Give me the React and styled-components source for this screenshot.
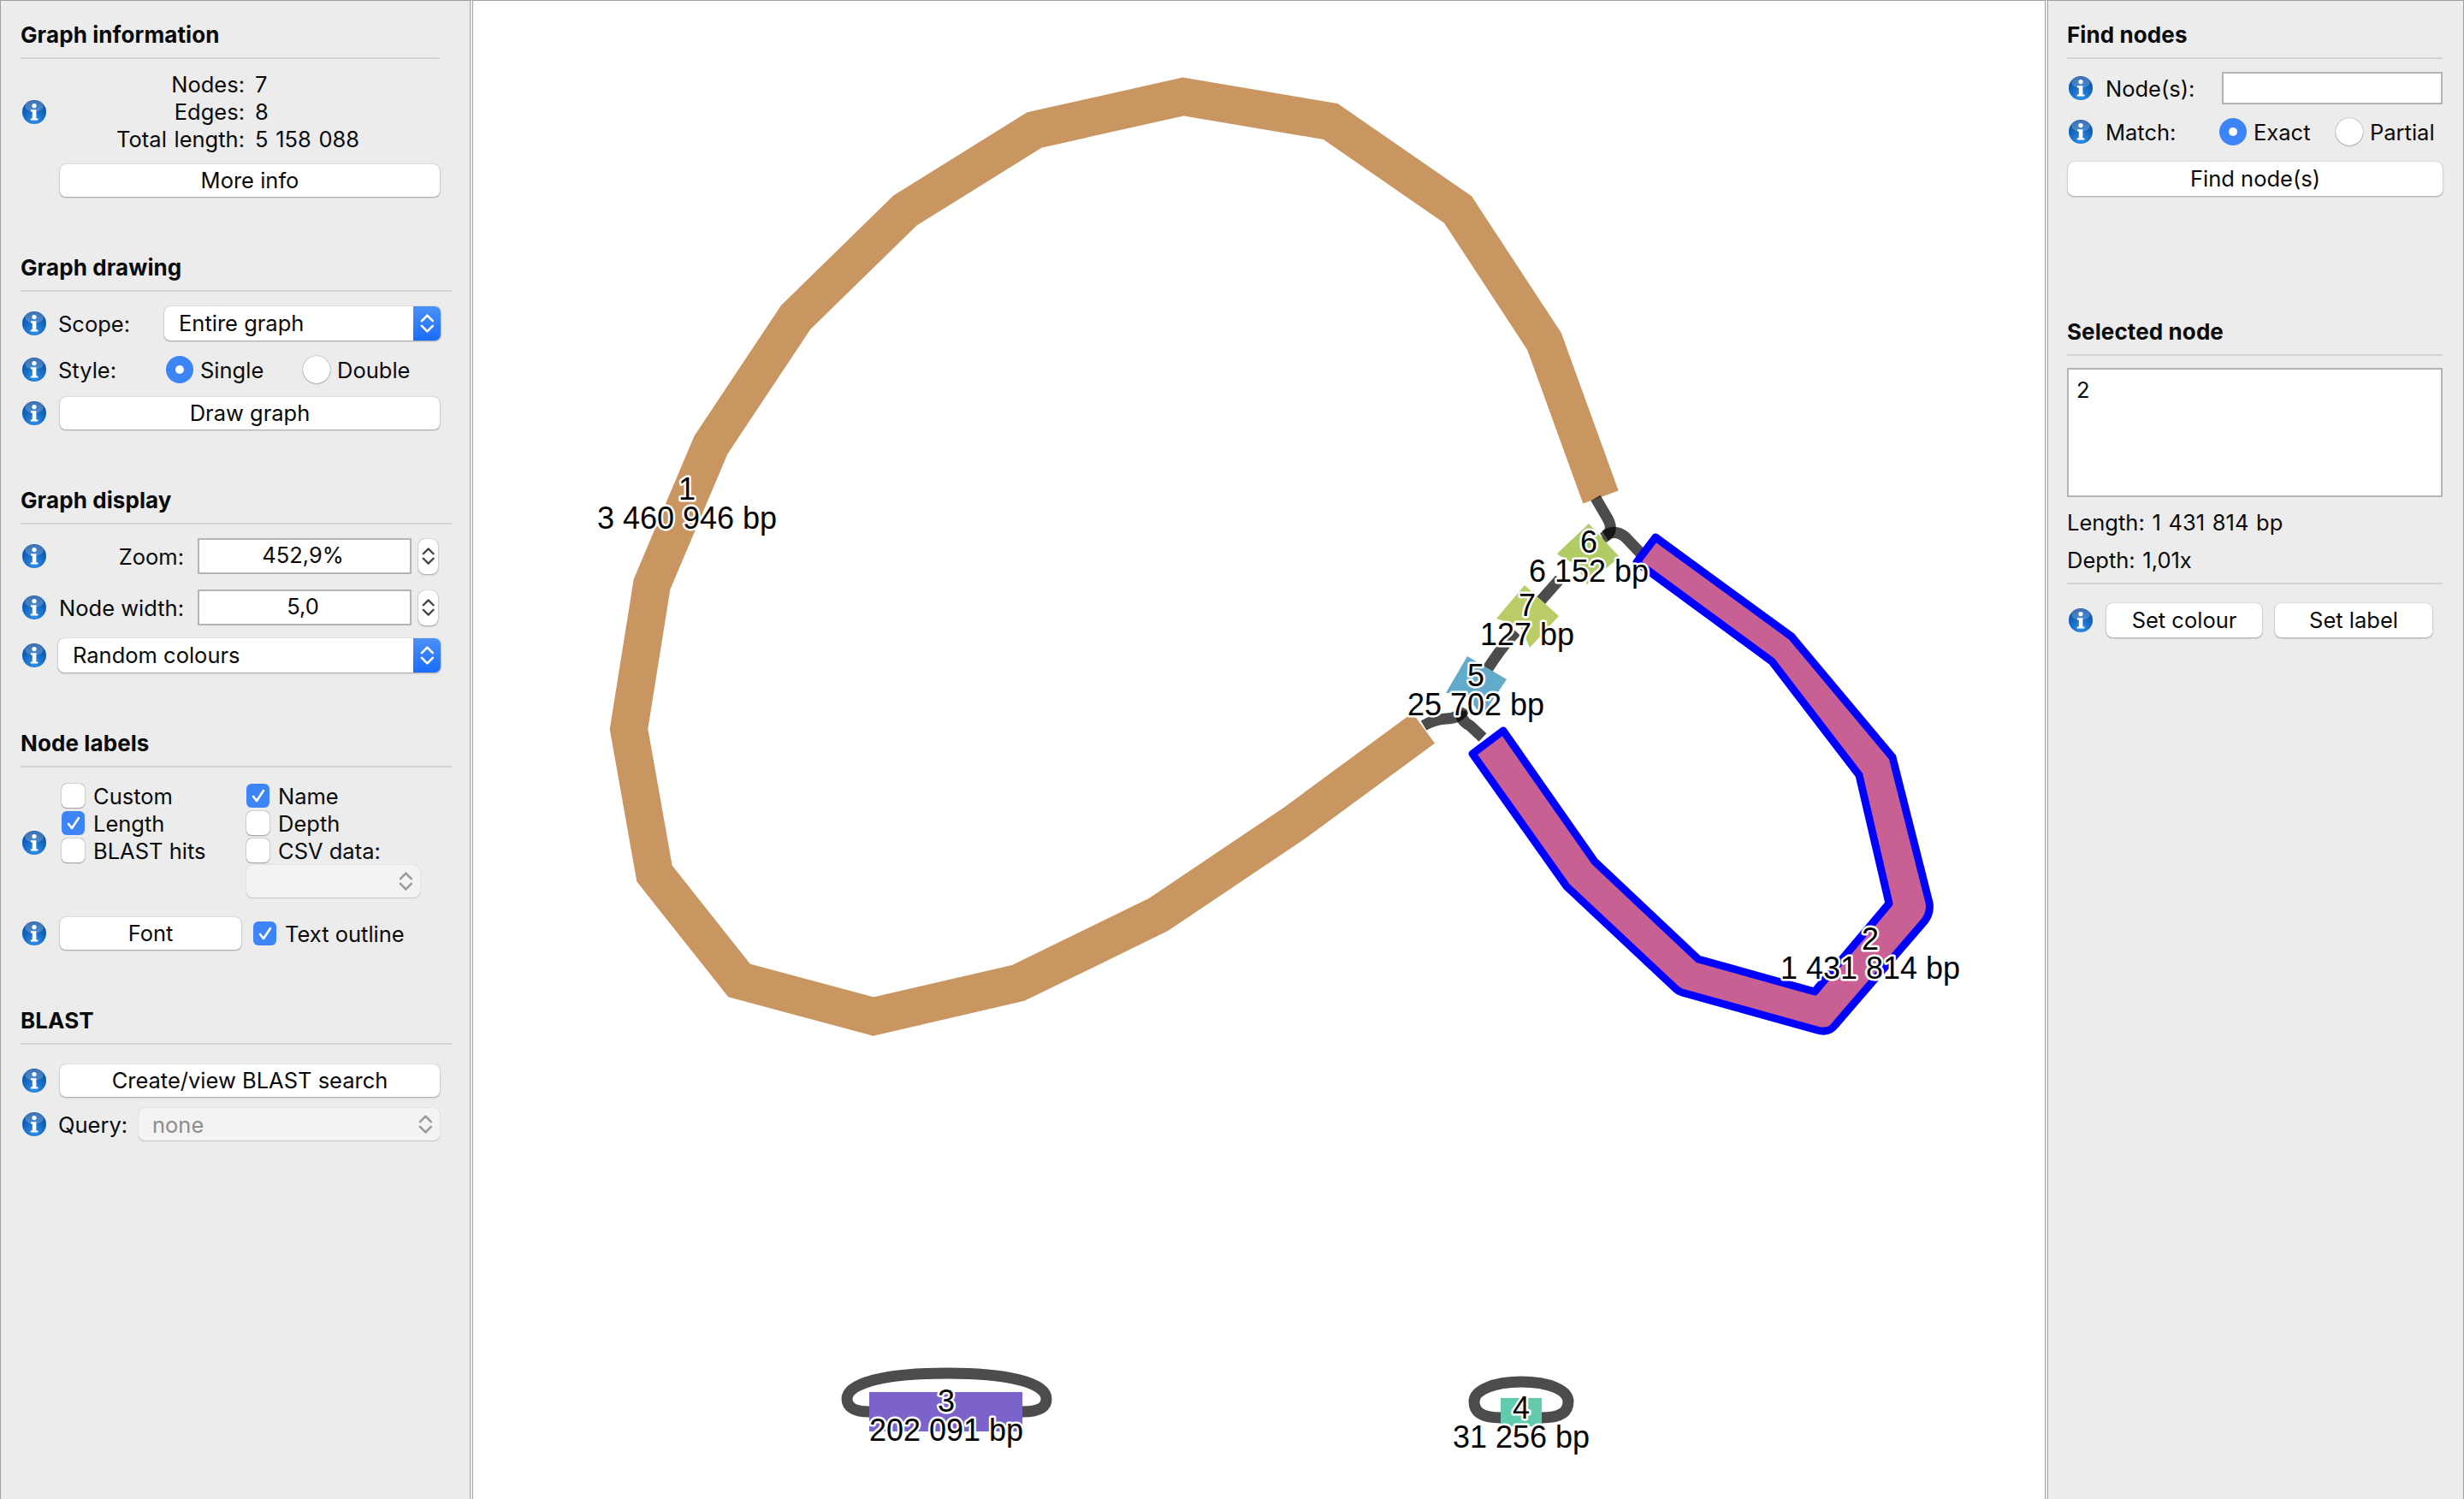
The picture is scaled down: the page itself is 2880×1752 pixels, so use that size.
import React from "react";
import styled, { createGlobalStyle } from "styled-components";

const GlobalStyle = createGlobalStyle`
  html, body {
    margin: 0;
    padding: 0;
    background: #ececec;
  }
  body {
    font-family: Inter, "Liberation Sans", sans-serif;
    font-size: 25.5px;
    color: #0a0a0a;
  }
`;

let gradientCount = 0;

function InfoIcon({ $shift }) {
  const id = `info-${gradientCount++}`;
  return (
    <InfoSvg viewBox="0 0 28 30" $shift={$shift}>
      <defs>
        <radialGradient id={id} cx="0.5" cy="0.85" r="0.85">
          <stop offset="0" stopColor="#2e90e6" />
          <stop offset="0.6" stopColor="#1264bd" />
          <stop offset="1" stopColor="#0a4a9c" />
        </radialGradient>
      </defs>
      <circle cx="14" cy="15" r="14" fill={`url(#${id})`} />
      <ellipse cx="14" cy="8" rx="11" ry="6.6" fill="#fff" opacity="0.22" />
      <circle cx="14" cy="7.6" r="2.6" fill="#fff" />
      <path d="M10 12.2h6.4v10.2h2v2.2H9.8v-2.2h2v-8H10z" fill="#fff" />
    </InfoSvg>
  );
}

function Chevrons({ color, size = 24 }) {
  return (
    <svg width={size * 0.7} height={size} viewBox="0 0 17 24" fill="none">
      <path
        d="M2 9l6.5-6.5L15 9M2 15l6.5 6.5L15 15"
        stroke={color}
        strokeWidth="2.6"
        strokeLinecap="round"
        strokeLinejoin="round"
      />
    </svg>
  );
}

function Check() {
  return (
    <svg width="18" height="18" viewBox="0 0 18 18" fill="none">
      <path
        d="M3 10l4 5 8-12"
        stroke="#fff"
        strokeWidth="2.6"
        strokeLinecap="round"
        strokeLinejoin="round"
      />
    </svg>
  );
}

function Checkbox({ checked, children }) {
  return (
    <CheckRow>
      <CheckBoxMark $checked={checked}>{checked && <Check />}</CheckBoxMark>
      {children}
    </CheckRow>
  );
}

function Radio({ checked, width, children }) {
  return (
    <RadioOption $width={width}>
      <RadioMark $checked={checked} />
      {children}
    </RadioOption>
  );
}

function Select({ children, width }) {
  return (
    <SelectBox $width={width}>
      <SelectText>{children}</SelectText>
      <SelectArrow>
        <Chevrons color="#fff" />
      </SelectArrow>
    </SelectBox>
  );
}

function Spinner() {
  return (
    <SpinBox>
      <Chevrons color="#444" size={22} />
    </SpinBox>
  );
}

const node1Path =
  "M1871 581 L1805 399 L1704 245 L1555 142 L1383 113 L1209 152 L1058 246 L930 371 L831 520 L762 683 L735 852 L765 1021 L864 1146 L1021 1188 L1190 1149 L1354 1069 L1513 962 L1664 851";

const node2Path =
  "M1935 628 L2094 744 L2212 885 L2255 1055 Q2257 1066 2250 1076 L2145 1198 Q2138 1208 2124 1204 L1966 1160 Q1962 1159 1958 1155 L1831 1036 L1721 881 L1757 854 L1864 1007 L1985 1121 L2121 1159 L2208 1056 L2173 906 L2071 773 L1913 657 Z";

const edges = [
  "M1865 582 L1879 606 Q1888 622 1873 629",
  "M1876 626 Q1888 618 1900 628 L1918 647",
  "M1823 677 L1800 703",
  "M1772 738 Q1756 755 1738 783",
  "M1712 828 Q1706 840 1690 840 Q1676 841 1664 848",
  "M1708 830 Q1706 842 1718 848 L1733 862",
  "M1016 1650 C1000 1650 990 1645 990 1635 C990 1615 1040 1605 1107 1605 C1174 1605 1223 1615 1223 1635 C1223 1645 1215 1650 1195 1650",
  "M1754 1657 C1732 1657 1723 1650 1723 1638 C1723 1625 1746 1615 1778 1615 C1811 1615 1833 1625 1833 1638 C1833 1650 1825 1657 1802 1657",
];

const smallNodes = [
  { color: "#b0cc65", points: "1857,612 1893,651 1855,683 1842,660 1822,649 1820,647" },
  { color: "#b9cc65", points: "1782,684 1822,720 1788,757 1777,732 1749,723" },
  { color: "#63abcb", points: "1715,767 1761,794 1732,837 1712,810 1690,810" },
];

const rects = [
  { color: "#7c62cb", x: 1016, y: 1627, w: 179, h: 46 },
  { color: "#62cbad", x: 1754, y: 1634, w: 48, h: 33 },
];

const labels = [
  { x: 803, y: 584, name: "1", length: "3 460 946 bp" },
  { x: 2186, y: 1110, name: "2", length: "1 431 814 bp" },
  { x: 1106, y: 1650, name: "3", length: "202 091 bp" },
  { x: 1778, y: 1658, name: "4", length: "31 256 bp" },
  { x: 1725, y: 802, name: "5", length: "25 702 bp" },
  { x: 1857, y: 646, name: "6", length: "6 152 bp" },
  { x: 1785, y: 720, name: "7", length: "127 bp" },
];

function GraphDrawing() {
  return (
    <GraphSvg viewBox="553 0 1837 1752">
      <path d={node1Path} fill="none" stroke="#c99560" strokeWidth="44" />
      {edges.map((d) => (
        <path
          key={d}
          d={d}
          fill="none"
          stroke="#000"
          strokeOpacity="0.7"
          strokeWidth="13"
        />
      ))}
      <path
        d={node2Path}
        fill="#c86093"
        stroke="#0000ff"
        strokeWidth="9"
        strokeLinejoin="round"
      />
      {smallNodes.map((n) => (
        <polygon key={n.color} points={n.points} fill={n.color} />
      ))}
      {rects.map((r) => (
        <rect
          key={r.color}
          x={r.x}
          y={r.y}
          width={r.w}
          height={r.h}
          fill={r.color}
        />
      ))}
      {labels.map((l) => (
        <g key={l.name}>
          <NodeText x={l.x} y={l.y}>
            {l.name}
          </NodeText>
          <NodeText x={l.x} y={l.y + 34}>
            {l.length}
          </NodeText>
        </g>
      ))}
    </GraphSvg>
  );
}

export default function App() {
  return (
    <>
      <GlobalStyle />
      <Window>
        <LeftPanel>
          <Section>
            <Title>Graph information</Title>
            <Rule $short />
            <Body $top={14}>
              <Row>
                <InfoIcon />
                <StatsGrid>
                  <StatLabel>Nodes:</StatLabel>
                  <span>7</span>
                  <StatLabel>Edges:</StatLabel>
                  <span>8</span>
                  <StatLabel>Total length:</StatLabel>
                  <span>5 158 088</span>
                </StatsGrid>
              </Row>
              <Button $top={13} $left={46}>
                More info
              </Button>
            </Body>
          </Section>

          <Section>
            <Title>Graph drawing</Title>
            <Rule />
            <Body $top={17}>
              <Row>
                <InfoIcon />
                <Label $width={124}>Scope:</Label>
                <Select width={323}>Entire graph</Select>
              </Row>
              <Row $top={18}>
                <InfoIcon />
                <Label $width={126}>Style:</Label>
                <Radio checked width={160}>
                  Single
                </Radio>
                <Radio>Double</Radio>
              </Row>
              <Row $top={16}>
                <InfoIcon />
                <Button $left={16}>Draw graph</Button>
              </Row>
            </Body>
          </Section>

          <Section>
            <Title>Graph display</Title>
            <Rule />
            <Body $top={16}>
              <Row>
                <InfoIcon />
                <Label $width={147} $right>
                  Zoom:
                </Label>
                <NumberField>452,9%</NumberField>
                <Spinner />
              </Row>
              <Row $top={18}>
                <InfoIcon />
                <Label $width={147} $right>
                  Node width:
                </Label>
                <NumberField>5,0</NumberField>
                <Spinner />
              </Row>
              <Row $top={15}>
                <InfoIcon />
                <Select width={447}>Random colours</Select>
              </Row>
            </Body>
          </Section>

          <Section>
            <Title>Node labels</Title>
            <Rule />
            <Body $top={17}>
              <Row>
                <InfoIcon $shift={3} />
                <ChecksGrid>
                  <Checkbox>Custom</Checkbox>
                  <Checkbox checked>Name</Checkbox>
                  <Checkbox checked>Length</Checkbox>
                  <Checkbox>Depth</Checkbox>
                  <Checkbox>BLAST hits</Checkbox>
                  <Checkbox>CSV data:</Checkbox>
                  <span />
                  <DisabledCombo $width={203}>
                    <Chevrons color="#9a9a9a" />
                  </DisabledCombo>
                </ChecksGrid>
              </Row>
              <Row $top={23}>
                <InfoIcon />
                <Button $left={16} $width={212}>
                  Font
                </Button>
                <OutlineCheck>
                  <Checkbox checked>Text outline</Checkbox>
                </OutlineCheck>
              </Row>
            </Body>
          </Section>

          <Section>
            <Title>BLAST</Title>
            <Rule />
            <Body $top={23}>
              <Row>
                <InfoIcon />
                <Button $left={16}>Create/view BLAST search</Button>
              </Row>
              <Row $top={13}>
                <InfoIcon />
                <Label $width={94}>Query:</Label>
                <DisabledCombo $width={352}>
                  <NoneText>none</NoneText>
                  <Chevrons color="#9a9a9a" />
                </DisabledCombo>
              </Row>
            </Body>
          </Section>
        </LeftPanel>

        <Canvas>
          <GraphDrawing />
        </Canvas>

        <RightPanel>
          <Section>
            <Title>Find nodes</Title>
            <Rule $short />
            <Body $top={15}>
              <Row>
                <InfoIcon />
                <Label $width={136} $gap={15}>
                  Node(s):
                </Label>
                <TextField />
              </Row>
              <MatchRow>
                <InfoIcon />
                <Label $width={133} $gap={15}>
                  Match:
                </Label>
                <Radio checked width={136}>
                  Exact
                </Radio>
                <Radio>Partial</Radio>
              </MatchRow>
              <Button $top={18} $left={1} $height={40}>
                Find node(s)
              </Button>
            </Body>
          </Section>

          <SelectedSection>
            <Title>Selected node</Title>
            <Rule $short />
            <Body $top={14}>
              <NodeBox>2</NodeBox>
              <Detail $top={14}>Length: 1 431 814 bp</Detail>
              <Detail $top={12}>Depth: 1,01x</Detail>
              <Rule $short $top={10} />
              <Row $top={22}>
                <InfoIcon />
                <Button $left={16} $width={182} $height={40}>
                  Set colour
                </Button>
                <Button $left={15} $width={184} $height={40}>
                  Set label
                </Button>
              </Row>
            </Body>
          </SelectedSection>
        </RightPanel>
      </Window>
    </>
  );
}

const Window = styled.div`
  display: flex;
  width: 2880px;
  height: 1752px;
  overflow: hidden;
`;

const LeftPanel = styled.aside`
  width: 553px;
  height: 1752px;
  box-sizing: border-box;
  padding: 25px 35px 0 23px;
  background: #ececec;
  border-top: 1px solid #a0a0a0;
  border-left: 1px solid #a0a0a0;
  border-right: 4px double #a5a5a5;
  display: flex;
  flex-direction: column;
  gap: 68px;
`;

const Canvas = styled.main`
  width: 1837px;
  height: 1752px;
  background: #fff;
  border-top: 1px solid #a0a0a0;
  box-sizing: border-box;
`;

const GraphSvg = styled.svg`
  display: block;
  width: 1837px;
  height: 1752px;
  margin-top: -1px;
`;

const NodeText = styled.text`
  font-family: "Liberation Sans", Arial, sans-serif;
  font-size: 36px;
  text-anchor: middle;
  fill: #000;
  stroke: #fff;
  stroke-width: 5px;
  stroke-linejoin: round;
  paint-order: stroke;
`;

const RightPanel = styled.aside`
  width: 490px;
  height: 1752px;
  box-sizing: border-box;
  padding: 25px 24px 0 22px;
  background: #ececec;
  border-top: 1px solid #a0a0a0;
  border-left: 4px double #a5a5a5;
  border-right: 1px solid #a0a0a0;
`;

const Section = styled.section`
  display: block;
`;

const SelectedSection = styled.section`
  margin-top: 144px;
`;

const Title = styled.h2`
  margin: 0 0 11px;
  font-size: 26px;
  line-height: 30px;
  font-weight: 700;
  letter-spacing: 0.1px;
`;

const Rule = styled.div`
  height: 2px;
  background: #d4d4d4;
  margin-top: ${(p) => p.$top || 0}px;
  margin-right: ${(p) => (p.$short ? "0" : "-14px")};
`;

const Body = styled.div`
  padding-top: ${(p) => p.$top}px;
`;

const Row = styled.div`
  display: flex;
  align-items: center;
  padding-left: 2px;
  margin-top: ${(p) => p.$top || 0}px;
`;

const MatchRow = styled(Row)`
  margin-top: 15px;
  height: 34px;
`;

const InfoSvg = styled.svg`
  flex: none;
  width: 28px;
  height: 30px;
  transform: translateY(${(p) => p.$shift || 0}px);
`;

const StatsGrid = styled.div`
  display: grid;
  grid-template-columns: 232px auto;
  column-gap: 12px;
  grid-auto-rows: 32px;
  line-height: 32px;
  word-spacing: 1.5px;
`;

const StatLabel = styled.span`
  text-align: right;
`;

const Label = styled.span`
  flex: none;
  width: ${(p) => p.$width}px;
  margin-left: ${(p) => p.$gap || 14}px;
  margin-right: ${(p) => (p.$right ? 16 : 0)}px;
  text-align: ${(p) => (p.$right ? "right" : "left")};
  white-space: nowrap;
`;

const Button = styled.button`
  display: block;
  width: ${(p) => (p.$width ? `${p.$width}px` : `calc(100% - ${p.$left || 0}px)`)};
  flex: ${(p) => (p.$width ? "none" : "1")};
  height: ${(p) => p.$height || 38}px;
  box-sizing: border-box;
  margin-top: ${(p) => p.$top || 0}px;
  margin-left: ${(p) => p.$left || 0}px;
  padding: 0;
  border: 0;
  border-radius: 7px;
  background: #fff;
  box-shadow: 0 0 1px rgba(0, 0, 0, 0.35), 0 1px 2px rgba(0, 0, 0, 0.3);
  font: inherit;
  color: inherit;
  line-height: 36px;
`;

const SelectBox = styled.div`
  flex: none;
  width: ${(p) => p.$width}px;
  height: 40px;
  margin-left: ${(p) => (p.$width > 400 ? 14 : 0)}px;
  display: flex;
  border-radius: 7px;
  overflow: hidden;
  background: #fff;
  box-shadow: 0 0 1px rgba(0, 0, 0, 0.35), 0 1px 2px rgba(0, 0, 0, 0.3);
`;

const SelectText = styled.span`
  flex: 1;
  padding-left: 17px;
  line-height: 39px;
`;

const SelectArrow = styled.span`
  flex: none;
  width: 32px;
  display: flex;
  align-items: center;
  justify-content: center;
  background: linear-gradient(#4b90f6, #1a6dfb);
`;

const RadioOption = styled.span`
  display: inline-flex;
  align-items: center;
  gap: 8px;
  flex: none;
  width: ${(p) => (p.$width ? `${p.$width}px` : "auto")};
`;

const RadioMark = styled.span`
  flex: none;
  box-sizing: border-box;
  width: 32px;
  height: 32px;
  border-radius: 50%;
  display: flex;
  align-items: center;
  justify-content: center;
  background: ${(p) => (p.$checked ? "#3d85f7" : "#fff")};
  box-shadow: ${(p) =>
    p.$checked ? "none" : "0 0 1px rgba(0,0,0,.5), 0 0.5px 1.5px rgba(0,0,0,.35)"};
  &::after {
    content: "";
    width: 10px;
    height: 10px;
    border-radius: 50%;
    background: #fff;
    display: ${(p) => (p.$checked ? "block" : "none")};
  }
`;

const NumberField = styled.div`
  flex: none;
  width: 250px;
  height: 42px;
  box-sizing: border-box;
  border: 2px solid #b4b4b4;
  background: #fff;
  text-align: center;
  line-height: 36px;
  padding-right: 4px;
`;

const TextField = styled.div`
  flex: none;
  width: 258px;
  height: 38px;
  box-sizing: border-box;
  border: 2px solid #b4b4b4;
  background: #fff;
`;

const SpinBox = styled.div`
  flex: none;
  width: 23px;
  height: 41px;
  margin-left: 8px;
  display: flex;
  align-items: center;
  justify-content: center;
  border-radius: 8px;
  background: #fff;
  box-shadow: 0 0 1px rgba(0, 0, 0, 0.4), 0 1px 2px rgba(0, 0, 0, 0.3);
`;

const ChecksGrid = styled.div`
  display: grid;
  grid-template-columns: 216px auto;
  grid-template-rows: repeat(3, 32px) 39px;
  margin-left: 18px;
`;

const CheckRow = styled.span`
  display: inline-flex;
  align-items: center;
  gap: 10px;
  height: 32px;
  white-space: nowrap;
`;

const CheckBoxMark = styled.span`
  flex: none;
  width: 27px;
  height: 28px;
  box-sizing: border-box;
  border-radius: 6px;
  display: flex;
  align-items: center;
  justify-content: center;
  background: ${(p) => (p.$checked ? "#3d85f7" : "#fff")};
  box-shadow: ${(p) =>
    p.$checked ? "none" : "0 0 1px rgba(0,0,0,.5), 0 0.5px 1.5px rgba(0,0,0,.3)"};
`;

const OutlineCheck = styled.span`
  margin-left: 14px;
`;

const DisabledCombo = styled.div`
  flex: none;
  align-self: end;
  width: ${(p) => p.$width}px;
  height: 38px;
  box-sizing: border-box;
  padding: 0 8px 0 16px;
  display: flex;
  align-items: center;
  justify-content: flex-end;
  border-radius: 7px;
  background: #f3f3f3;
  box-shadow: 0 0 1px rgba(0, 0, 0, 0.25), 0 1px 1px rgba(0, 0, 0, 0.15);
`;

const NoneText = styled.span`
  flex: 1;
  color: #8c8c8c;
`;

const NodeBox = styled.div`
  height: 151px;
  box-sizing: border-box;
  padding: 8px 9px;
  border: 2px solid #b4b4b4;
  background: #fff;
  line-height: 32px;
`;

const Detail = styled.div`
  margin-top: ${(p) => p.$top}px;
  line-height: 32px;
  word-spacing: 1.5px;
`;
